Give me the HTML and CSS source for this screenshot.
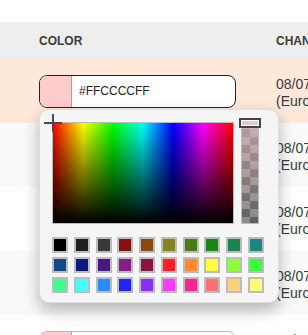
FILE: index.html
```html
<!DOCTYPE html>
<html>
<head>
<meta charset="utf-8">
<link rel="stylesheet" href="styles.css">
</head>
<body>
<div class="table">
  <div class="head">
    <div class="col-color">COLOR</div>
    <div class="col-date">CHANGED AT</div>
  </div>
  <div class="row peach">
    <div class="col-color">
      <div class="field-wrap">
        <div class="field focused">
          <span class="chip"></span>
          <span class="value">#FFCCCCFF</span>
        </div>
        <div class="picker">
          <div class="pick-top">
            <div class="spectrum">
              <div class="cross"></div>
            </div>
            <div class="alpha">
              <div class="alpha-track"></div>
              <div class="alpha-handle"></div>
            </div>
          </div>
          <div class="swatches">
            <span class="sw" style="background:#000000"></span>
            <span class="sw" style="background:#1e1e1e"></span>
            <span class="sw" style="background:#383838"></span>
            <span class="sw" style="background:#85100e"></span>
            <span class="sw" style="background:#87490f"></span>
            <span class="sw" style="background:#86821f"></span>
            <span class="sw" style="background:#4a7d18"></span>
            <span class="sw" style="background:#1c821a"></span>
            <span class="sw" style="background:#1b844f"></span>
            <span class="sw" style="background:#1e8585"></span>
            <span class="sw" style="background:#0f4b87"></span>
            <span class="sw" style="background:#0c1a84"></span>
            <span class="sw" style="background:#481884"></span>
            <span class="sw" style="background:#871e87"></span>
            <span class="sw" style="background:#861546"></span>
            <span class="sw" style="background:#ff1f23"></span>
            <span class="sw" style="background:#ff8a2e"></span>
            <span class="sw" style="background:#ffff3d"></span>
            <span class="sw" style="background:#8cff38"></span>
            <span class="sw" style="background:#35ff36"></span>
            <span class="sw" style="background:#3dff8c"></span>
            <span class="sw" style="background:#44ffff"></span>
            <span class="sw" style="background:#2b8cff"></span>
            <span class="sw" style="background:#2024ff"></span>
            <span class="sw" style="background:#8a2eff"></span>
            <span class="sw" style="background:#ff3aff"></span>
            <span class="sw" style="background:#ff2490"></span>
            <span class="sw" style="background:#ff7070"></span>
            <span class="sw" style="background:#ffd07a"></span>
            <span class="sw" style="background:#fffa7a"></span>
          </div>
        </div>
      </div>
    </div>
    <div class="col-date"><div>08/07/2025, 14:32</div><div>(Europe/Paris)</div></div>
  </div>
  <div class="row grey">
    <div class="col-color"><div class="field"><span class="chip"></span><span class="value">#FFCCCCFF</span></div></div>
    <div class="col-date"><div>08/07/2025, 14:32</div><div>(Europe/Paris)</div></div>
  </div>
  <div class="row">
    <div class="col-color"><div class="field"><span class="chip"></span><span class="value">#FFCCCCFF</span></div></div>
    <div class="col-date"><div>08/07/2025, 14:32</div><div>(Europe/Paris)</div></div>
  </div>
  <div class="row grey">
    <div class="col-color"><div class="field"><span class="chip"></span><span class="value">#FFCCCCFF</span></div></div>
    <div class="col-date"><div>08/07/2025, 14:32</div><div>(Europe/Paris)</div></div>
  </div>
  <div class="row">
    <div class="col-color"><div class="field"><span class="chip"></span><span class="value">#FFCCCCFF</span></div></div>
    <div class="col-date"><div>08/07/2025, 14:32</div><div>(Europe/Paris)</div></div>
  </div>
</div>
</body>
</html>
```

FILE: styles.css
```css
html, body {
  margin: 0;
  padding: 0;
  background: #fff;
  overflow: hidden;
}
body {
  font-family: "Liberation Sans", Arial, sans-serif;
  color: #333;
}
.table {
  padding-top: 22px;
  width: 600px;
}
.head {
  display: flex;
  align-items: center;
  height: 37px;
  background: #eeeeee;
  font-weight: bold;
  font-size: 12px;
  color: #3c3c3c;
}
.col-color {
  width: 276px;
  padding-left: 39px;
  box-sizing: border-box;
  flex: none;
}
.col-date {
  white-space: nowrap;
}
.row {
  display: flex;
  align-items: center;
  height: 64px;
  background: #fff;
}
.row.peach { background: #fde8da; }
.row.grey { background: #f9f9f9; }
.row .col-date {
  font-size: 14px;
  line-height: 17px;
  color: #3a3a3a;
  padding-top: 3px;
}
.field-wrap {
  position: relative;
  width: 197px;
}
.field {
  display: flex;
  align-items: center;
  width: 197px;
  height: 33px;
  box-sizing: border-box;
  border: 1px solid #bbb;
  border-radius: 8px;
  background: #fff;
  overflow: hidden;
}
.field.focused {
  border-color: #2a2222;
}
.chip {
  width: 31px;
  height: 100%;
  background: #ffcccc;
  border-right: 1px solid #a9a0a0;
  flex: none;
}
.value {
  padding-left: 7px;
  font-size: 12px;
  color: #222;
}
.picker {
  position: absolute;
  left: 0;
  top: 34px;
  width: 240px;
  height: 194px;
  box-sizing: border-box;
  padding: 12px;
  background: #f5f5f5;
  border: 1px solid #dedede;
  border-radius: 10px;
  box-shadow: 0 7px 16px rgba(0, 0, 0, 0.28);
  z-index: 5;
}
.pick-top {
  display: flex;
  align-items: flex-start;
}
.spectrum {
  position: relative;
  width: 182px;
  height: 102px;
  box-sizing: border-box;
  border: 1px solid #bbb;
  background:
    linear-gradient(to bottom, rgba(0,0,0,0) 0%, #000 100%),
    linear-gradient(to right, #f00 0%, #ff0 16.7%, #0f0 33.3%, #0ff 50%, #00f 66.7%, #f0f 83.3%, #f00 100%);
}
.cross {
  position: absolute;
  left: -9px;
  top: -9px;
  width: 18px;
  height: 18px;
  background:
    linear-gradient(#4a4a4a, #4a4a4a) center / 2px 18px no-repeat,
    linear-gradient(#4a4a4a, #4a4a4a) center / 18px 2px no-repeat;
}
.alpha {
  position: relative;
  margin-left: 7px;
  padding-top: 6px;
  width: 18px;
}
.alpha-track {
  width: 18px;
  height: 96px;
  box-sizing: border-box;
  border: 1px solid #bbb;
  background:
    linear-gradient(to bottom, rgba(255,204,204,0.55), rgba(255,204,204,0)),
    conic-gradient(#8a8a8a 25%, #5f5f5f 0 50%, #8a8a8a 0 75%, #5f5f5f 0) 0 0 / 16px 16px;
}
.alpha-handle {
  position: absolute;
  left: -2px;
  top: -4px;
  width: 22px;
  height: 10px;
  box-sizing: border-box;
  border: 2px solid #444;
  background: #f2c4c4;
  box-shadow: inset 0 0 0 1px #fff;
}
.swatches {
  margin-top: 13px;
  width: 212px;
  display: grid;
  grid-template-columns: repeat(10, 16px);
  justify-content: space-between;
  row-gap: 4px;
}
.sw {
  display: block;
  width: 16px;
  height: 16px;
  box-sizing: border-box;
  border: 2px solid #bcbcbc;
}
```
